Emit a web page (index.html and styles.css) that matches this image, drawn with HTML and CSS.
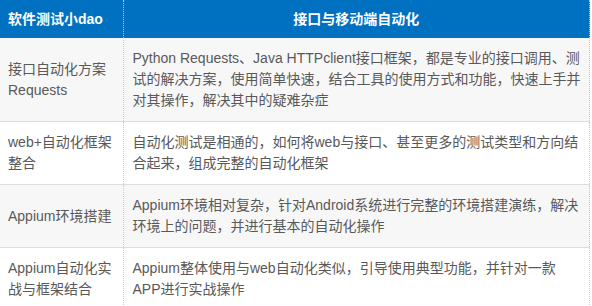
FILE: index.html
```html
<!DOCTYPE html>
<html lang="zh-CN">
<head>
<meta charset="utf-8">
<link rel="stylesheet" href="styles.css">
</head>
<body>
<table class="course">
  <thead>
    <tr>
      <th class="c-name">软件测试小dao</th>
      <th class="c-desc center">接口与移动端自动化</th>
    </tr>
  </thead>
  <tbody>
    <tr class="alt">
      <td class="c-name">接口自动化方案Requests</td>
      <td class="c-desc">Python Requests、Java HTTPclient接口框架，都是专业的接口调用、测试的解决方案，使用简单快速，结合工具的使用方式和功能，快速上手并对其操作，解决其中的疑难杂症</td>
    </tr>
    <tr>
      <td class="c-name">web+自动化框架整合</td>
      <td class="c-desc">自动化测试是相通的，如何将web与接口、甚至更多的测试类型和方向结合起来，组成完整的自动化框架</td>
    </tr>
    <tr class="alt">
      <td class="c-name">Appium环境搭建</td>
      <td class="c-desc">Appium环境相对复杂，针对Android系统进行完整的环境搭建演练，解决环境上的问题，并进行基本的自动化操作</td>
    </tr>
    <tr class="last">
      <td class="c-name">Appium自动化实战与框架结合</td>
      <td class="c-desc">Appium整体使用与web自动化类似，引导使用典型功能，并针对一款APP进行实战操作</td>
    </tr>
  </tbody>
</table>
</body>
</html>
```

FILE: styles.css
```css
html, body {
  margin: 0;
  padding: 0;
  background: #ffffff;
}

.course {
  border-collapse: collapse;
  width: 590px;
  table-layout: fixed;
  font-family: "Liberation Sans", "Noto Sans CJK SC", sans-serif;
  font-size: 14px;
  line-height: 21px;
  color: #595959;
}

.course th {
  background: #0070c0;
  color: #ffffff;
  font-weight: bold;
  height: 38px;
  padding: 0 8px;
  text-align: left;
  vertical-align: middle;
  box-sizing: border-box;
}

.course th.center {
  text-align: center;
}

.course td {
  padding: 10px 9px 10px 8px;
  vertical-align: middle;
  border-bottom: 1px solid #dddddd;
  line-break: strict;
}

.course td.c-desc {
  padding-left: 9px;
  padding-right: 6px;
}

.course .c-name {
  width: 123px;
  border-right: 1px dotted #c8c8c8;
}

.course .c-desc {
  border-right: 1px dotted #c8c8c8;
}

.course tr.alt td {
  background: #f7f7f7;
}

.course tr.last td {
  border-bottom: 1px dotted #c8c8c8;
}
```
